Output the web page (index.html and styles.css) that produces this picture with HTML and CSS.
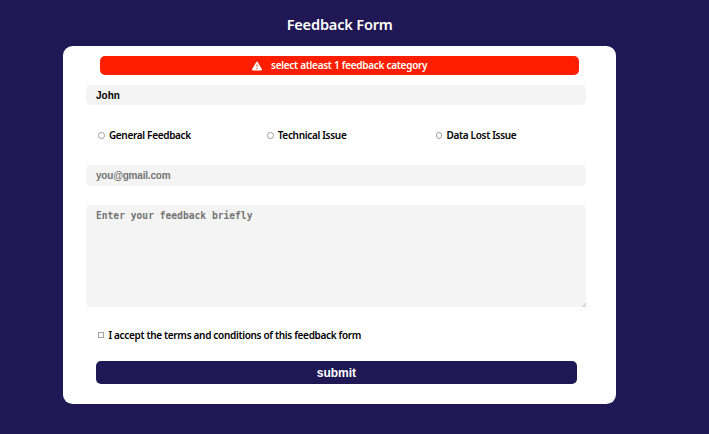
FILE: index.html
```
<!DOCTYPE html>
<html lang="en">
<head>
<meta charset="utf-8">
<title>Feedback Form</title>
<link rel="stylesheet" href="styles.css">
</head>
<body>
<main class="page">
  <h1 class="title">Feedback Form</h1>
  <form class="card">
    <div class="alert">
      <svg class="alert-icon" viewBox="0 0 512 512" aria-hidden="true"><path fill-rule="evenodd" d="M256 32c14 0 27 8 35 20l216 368c7 12 7 27 0 40s-20 20-35 20H40c-15 0-28-8-35-20s-7-28 0-40L221 52c8-12 21-20 35-20zm0 128c-15 0-27 11-25 27l8 121c1 9 8 15 17 15s16-6 17-15l8-121c2-16-10-27-25-27zm0 192a34 34 0 1 0 0 68 34 34 0 0 0 0-68z"/></svg>
      <span class="alert-text">select atleast 1 feedback category</span>
    </div>
    <input class="field name" type="text" value="John" aria-label="Name">
    <div class="categories">
      <label class="choice"><input type="radio" name="category"><span>General Feedback</span></label>
      <label class="choice"><input type="radio" name="category"><span>Technical Issue</span></label>
      <label class="choice"><input type="radio" name="category"><span>Data Lost Issue</span></label>
    </div>
    <input class="field email" type="email" placeholder="you@gmail.com">
    <div class="message-box">
      <textarea class="field message" placeholder="Enter your feedback briefly"></textarea>
      <svg class="grip" viewBox="0 0 4 4" aria-hidden="true"><path d="M0 4L4 0M2 4l2-2"/></svg>
    </div>
    <label class="choice terms"><input type="checkbox"><span>I accept the terms and conditions of this feedback form</span></label>
    <button class="submit" type="button">submit</button>
  </form>
</main>
</body>
</html>
```
FILE: styles.css
```
* { box-sizing: border-box; }
body {
  margin: 0;
  background: #201755;
  font-family: "Noto Sans", "Open Sans", sans-serif;
  font-weight: 600;
  color: #000;
}
.page {
  height: 434px;
  padding: 13px 93px 0 63.3px;
}
.title {
  margin: 0 0 11.4px;
  color: #fff;
  font-size: 14.6px;
  line-height: 22px;
  font-weight: 600;
  letter-spacing: -.2px;
  text-align: center;
}
.card {
  display: flex;
  flex-direction: column;
  height: 357.3px;
  padding: 9.6px 29.7px 0 23.1px;
  background: #fff;
  border-radius: 9.6px;
}
.alert {
  display: flex;
  align-items: center;
  justify-content: center;
  gap: 9.5px;
  height: 19.2px;
  margin: 0 7.3px 9.5px 13.4px;
  border-radius: 5px;
  background: #ff1f00;
  color: #fff;
  font-size: 10px;
  line-height: 14px;
  letter-spacing: -.28px;
}
.alert-text { padding-bottom: 1px; }
.alert-icon { width: 10px; height: 10px; fill: currentColor; }
.field {
  display: block;
  width: 100%;
  height: 20.7px;
  margin: 0;
  padding: 0 9.6px;
  border: 0;
  border-radius: 5px;
  outline: 0;
  background: #f4f4f4;
  color: #000;
  font: bold 10px "Liberation Sans", sans-serif;
  letter-spacing: -.2px;
}
.name { letter-spacing: 0; }
.field::placeholder { color: #757575; }
.categories {
  display: grid;
  grid-template-columns: repeat(3, 168.8px);
  height: 60px;
  padding-left: 12px;
  align-items: center;
}
.choice {
  display: flex;
  align-items: center;
  gap: 4px;
  font-size: 10px;
  line-height: 16px;
  letter-spacing: -.32px;
  white-space: nowrap;
}
.choice input {
  appearance: none;
  width: 6.5px;
  height: 6.5px;
  margin: 0;
  border: .6px solid #a0a0a0;
  background: #fff;
}
.choice input[type="radio"] { border-radius: 50%; }
.choice input[type="checkbox"] { width: 6px; height: 6px; }
.message-box {
  position: relative;
  height: 102px;
  margin-top: 19.2px;
}
.message {
  height: 100%;
  padding-top: 5px;
  resize: none;
  font-family: "DejaVu Sans Mono", monospace;
  font-size: 9.65px;
  letter-spacing: 0;
}
.grip {
  position: absolute;
  right: 0;
  bottom: 0;
  width: 4px;
  height: 4px;
  fill: none;
  stroke: #858585;
  stroke-width: .5;
}
.terms { margin: 19.8px 0 17.5px 12px; }
.submit {
  height: 23.6px;
  margin: 0 9.5px 0 9.7px;
  padding: 1px 0 0;
  border: 0;
  border-radius: 5px;
  background: #201755;
  color: #fff;
  font: bold 12px "Liberation Sans", sans-serif;
}
```
